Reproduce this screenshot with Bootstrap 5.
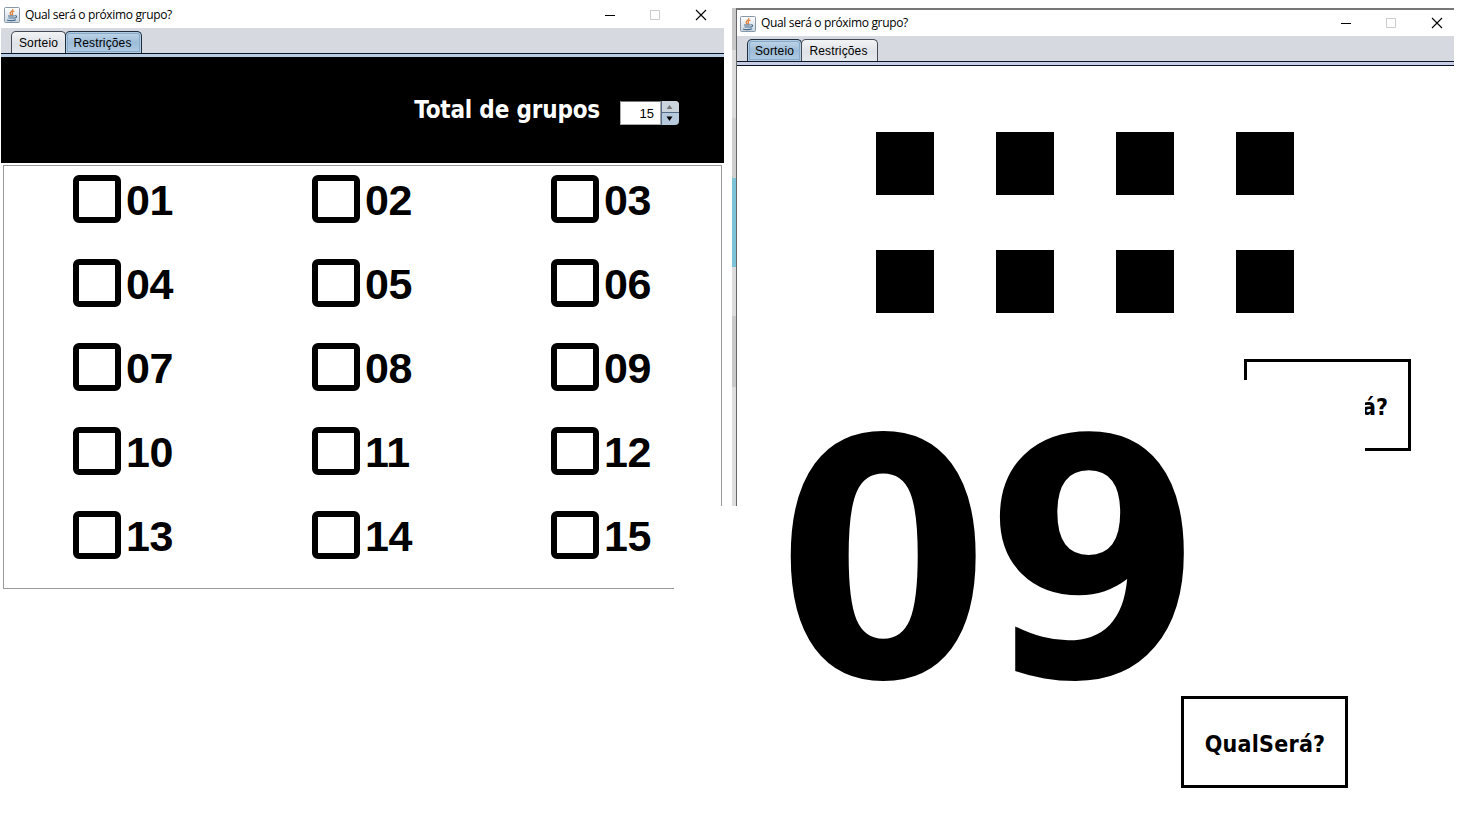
<!DOCTYPE html>
<html lang="pt-BR">
<head>
<meta charset="utf-8">
<title>Qual será o próximo grupo?</title>
<link href="https://cdn.jsdelivr.net/npm/bootstrap@5.3.0/dist/css/bootstrap.min.css" rel="stylesheet">
<style>
body{margin:0;background:#fff;color:#000;width:1464px;height:818px;overflow:hidden;font-family:"Liberation Sans",Arial,sans-serif}
.win-left{width:723px;margin-left:1px}
.edge-strip{width:4px;height:498px;margin:8px 0 0 8px;background:linear-gradient(to bottom,#c8c8c8 0 42px,#dcdcdc 42px 110px,#cfcfcf 110px 170px,#7cc4da 170px 259px,#dcdcdc 259px 308px,#c9c9c9 308px 379px,#dedede 379px)}
.win-right{width:718px;height:498px;margin-top:8px;border-left:1px solid #666;border-top:2px solid #777}
.title-bar{height:28px;background:#fff;font:12px/28px "Open Sans","Noto Sans",sans-serif}
.win-right .title-bar{height:26px;line-height:26px}
.title-text{width:160px;white-space:nowrap;letter-spacing:-.34px}
.tab-strip{height:25px;background:#d6d9df;padding-left:10px;padding-top:3px}
.swing-tab{height:22px;border:1px solid #444b57;border-bottom:0;border-radius:5px 5px 0 0;background:linear-gradient(#f2f3f5,#dfe2e7 55%,#e5e8ec);font-size:12px;line-height:23px;text-align:center;letter-spacing:.15px}
.swing-tab.on{border-color:#1d2e40;background:linear-gradient(#c3d7e9,#9dbcd8 50%,#b2cce2);box-shadow:inset 0 0 0 1px #b5cce0,inset 0 0 0 2px #86aacb}
.t-sort{width:55px}.t-rest{width:77px;margin-left:-1px;padding-right:2px}
.tab-line{height:4px;border-top:1px solid #0a1424;background:#b9cde4}
.win-right .tab-line{height:5px;border-bottom:1px solid #0a1424;background:#c8cde6}
.head-panel{height:106px;background:#000;padding-right:45px}
.head-label{font:bold 24px/30px "DejaVu Sans Condensed","DejaVu Sans",sans-serif;color:#fff;white-space:nowrap;letter-spacing:-.18px}
.spin{width:59px;height:24px;margin-left:20px;margin-top:6px}
.spin-value{width:41px;background:#fff;border:1px solid #aaa;border-top-color:#777;font-size:13px;line-height:24px;padding-right:6px}
.group-panel{width:719px;height:424px;margin:2px 0 0 2px;border:1px solid #999;display:grid;grid-template-columns:repeat(3,239px);grid-auto-rows:84px;padding-top:9px}
.group-item{padding-left:69px;height:48px;font-weight:bold;font-size:43px;line-height:50px;letter-spacing:-.3px}
.group-box{width:48px;height:48px;border:6px solid #000;border-radius:6px;margin-right:5px}
.dots{display:grid;grid-template-columns:repeat(4,57.5px);column-gap:62.5px;row-gap:54.500px;padding:66px 0 0 139px;grid-auto-rows:63px}
.dot-sq{background:#000}
.draw-btn{width:167px;height:92px;border:3px solid #000;background:#fff;font:bold 23px/30px "DejaVu Sans Condensed","DejaVu Sans",sans-serif;letter-spacing:.25px;padding:3px 0 0 1px}
.over{position:absolute}
</style>
<script src="https://cdn.jsdelivr.net/npm/bootstrap@5.3.0/dist/js/bootstrap.bundle.min.js"></script>
</head>
<body class="position-relative">
<svg width="0" height="0" class="over"><defs>
<linearGradient id="jbg" x2="0" y2="1"><stop stop-color="#fff"/><stop offset="1" stop-color="#c9d5e0"/></linearGradient>
<symbol id="java" viewBox="0 0 16 16"><rect x=".5" y=".5" width="15" height="15" rx="1" fill="url(#jbg)" stroke="#8797a8"/><path d="M8.700 2c1 2-3 2.500-2.500 4.500.2.900 1 1.200 1 2M10.500 4C8 4.800 7.800 5.600 8.500 6.600c.4.600 0 1.200-.5 1.700" fill="none" stroke="#e0803a" stroke-width="1.300"/><path d="M4 9h6.500M4.500 11h6M3 13c2 1 7 .8 9-.3M10.800 8.800c2.600-.5 2.400 1.800-.3 2.300" fill="none" stroke="#466b8d" stroke-width="1.100"/></symbol>
<symbol id="controls" viewBox="0 0 103 12"><path d="M0 6.500h10" stroke="#000"/><path d="M45.500 1.500h9v9h-9z" fill="none" stroke="#ccc"/><path d="M91 1l10 10M101 1L91 11" stroke="#000" stroke-width="1.100"/></symbol>
</defs></svg>
<main class="d-flex align-items-start">
<section class="win-left">
 <div class="title-bar d-flex align-items-center"><svg width="16" height="16" style="margin:2px 5px 0 3px"><use href="#java"/></svg><span class="title-text" style="margin-top:1px">Qual será o próximo grupo?</span><svg class="ms-auto" width="103" height="12" style="margin:2px 16px 0 0"><use href="#controls"/></svg></div>
 <div class="tab-strip d-flex"><div class="swing-tab t-sort">Sorteio</div><div class="swing-tab t-rest on">Restrições</div></div>
 <div class="tab-line"></div>
 <div class="head-panel d-flex align-items-center justify-content-end"><span class="head-label">Total de grupos</span>
  <div class="spin d-flex"><div class="spin-value text-end">15</div><svg width="18" height="24"><path d="M0 0h14q4 0 4 4v16q0 4-4 4H0z" fill="#b7c9dc"/><path d="M0 0h14q4 0 4 4v7H0z" fill="#cbd3dc"/><path d="M0 11.500h18M.5 0v24" stroke="#536b85"/><path d="M5.500 8h6L8.500 4z" fill="#777"/><path d="M5.500 15.500h6l-3 4.500z" fill="#000"/></svg></div></div>
 <div class="group-panel" id="groups"></div>
</section>
<div class="edge-strip"></div>
<section class="win-right">
 <div class="title-bar d-flex align-items-center"><svg width="16" height="16" style="margin:1px 5px 0 3px"><use href="#java"/></svg><span class="title-text">Qual será o próximo grupo?</span><svg class="ms-auto" width="103" height="12" style="margin:0 10px 0 0"><use href="#controls"/></svg></div>
 <div class="tab-strip d-flex"><div class="swing-tab t-sort on">Sorteio</div><div class="swing-tab t-rest">Restrições</div></div>
 <div class="tab-line"></div>
 <div class="dots"><i class="dot-sq"></i><i class="dot-sq"></i><i class="dot-sq"></i><i class="dot-sq"></i><i class="dot-sq"></i><i class="dot-sq"></i><i class="dot-sq"></i><i class="dot-sq"></i></div>
</section>
</main>
<div class="over draw-btn d-flex align-items-center justify-content-center" style="left:1244px;top:359px">QualSerá?</div>
<div class="over bg-white" style="left:740px;top:380px;width:625px;height:126px"></div>
<div class="over bg-white" style="left:674px;top:506px;width:790px;height:312px"></div>
<svg class="over" style="left:740px;top:340px" width="625" height="450" font-family="DejaVu Sans" font-weight="bold" font-size="330.600"><text transform="translate(36 336.300) scale(.932 1)">0</text><text transform="translate(243.500 336.300) scale(.959 1)">9</text></svg>
<div class="over draw-btn d-flex align-items-center justify-content-center" style="left:1181px;top:696px">QualSerá?</div>
<script>
document.getElementById('groups').innerHTML=Array.from({length:15},(_,i)=>'<label class="group-item d-flex"><span class="group-box"></span>'+String(i+1).padStart(2,'0')+'</label>').join('');
</script>
</body>
</html>
